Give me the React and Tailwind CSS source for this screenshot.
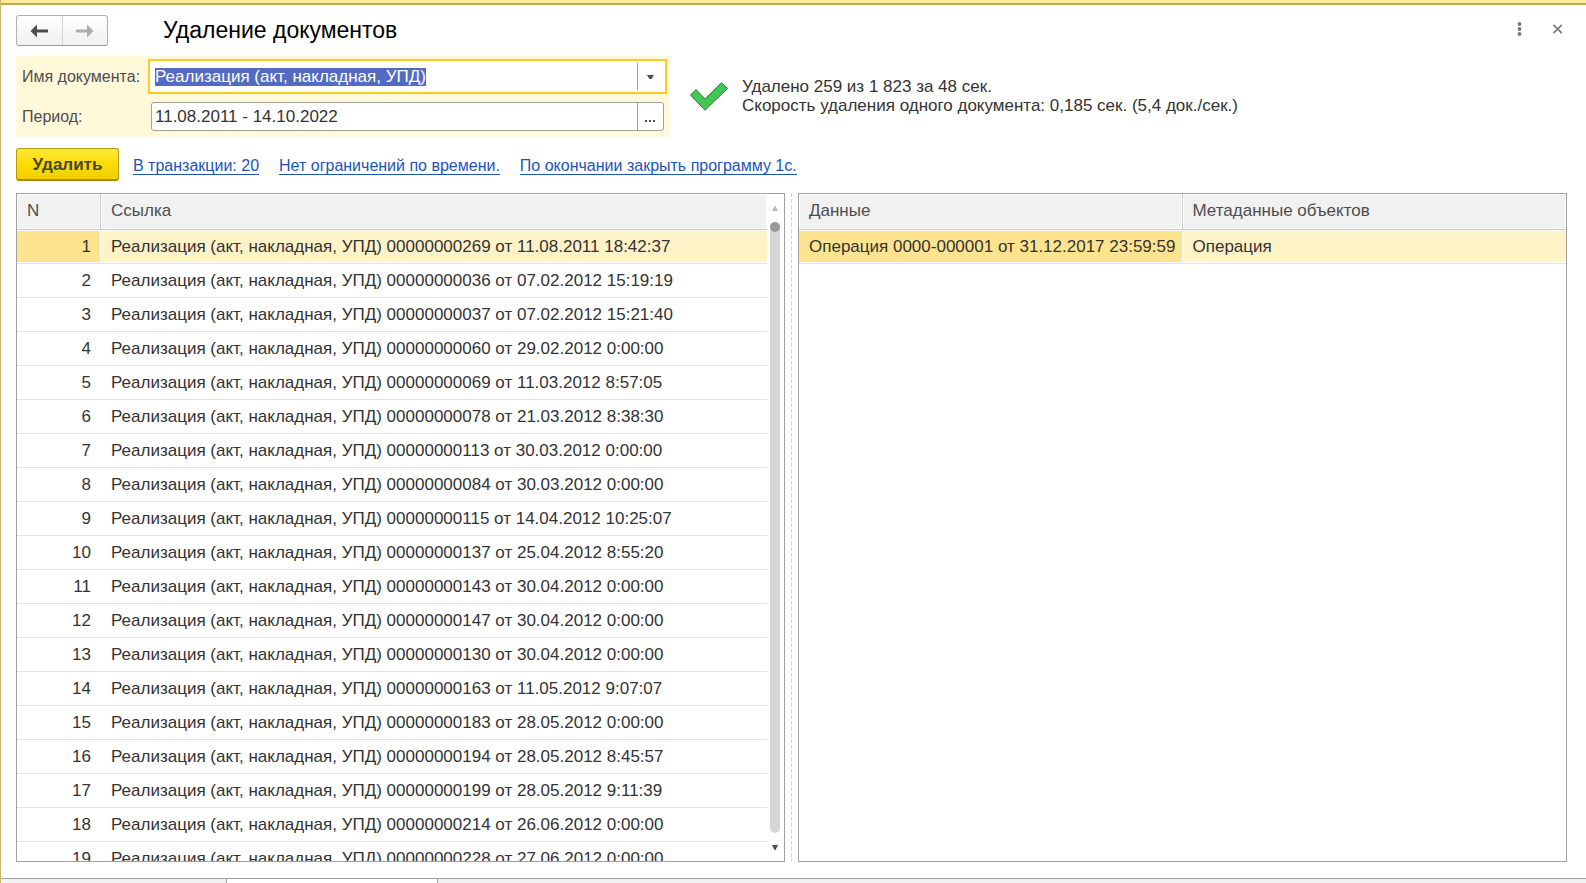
import { useEffect, useRef } from "react";

const documents = [
  ["00000000269", "11.08.2011 18:42:37"],
  ["00000000036", "07.02.2012 15:19:19"],
  ["00000000037", "07.02.2012 15:21:40"],
  ["00000000060", "29.02.2012 0:00:00"],
  ["00000000069", "11.03.2012 8:57:05"],
  ["00000000078", "21.03.2012 8:38:30"],
  ["00000000113", "30.03.2012 0:00:00"],
  ["00000000084", "30.03.2012 0:00:00"],
  ["00000000115", "14.04.2012 10:25:07"],
  ["00000000137", "25.04.2012 8:55:20"],
  ["00000000143", "30.04.2012 0:00:00"],
  ["00000000147", "30.04.2012 0:00:00"],
  ["00000000130", "30.04.2012 0:00:00"],
  ["00000000163", "11.05.2012 9:07:07"],
  ["00000000183", "28.05.2012 0:00:00"],
  ["00000000194", "28.05.2012 8:45:57"],
  ["00000000199", "28.05.2012 9:11:39"],
  ["00000000214", "26.06.2012 0:00:00"],
  ["00000000228", "27.06.2012 0:00:00"],
];

const headCell =
  "h-9 border-b border-[#c6c6c6] bg-[#f1f1f1] px-[10px] pb-[2px] text-left font-normal text-[#4d4d4d] shadow-[inset_0_0_0_1px_#fff]";
const cell = "h-[34px] border-b border-[#e3e3e3] px-[10px] whitespace-nowrap";
const currentCell =
  "bg-[#fee48f] shadow-[inset_0_1px_0_#fff,inset_0_-1px_0_#fff,inset_-1px_0_0_#fff]";
const currentRow = "bg-[#fef2c7] shadow-[inset_0_1px_0_#fff,inset_0_-1px_0_#fff]";

function TitleBar() {
  return (
    <header className="flex items-start justify-between">
      <div className="flex items-start">
        <div className="flex h-[31px] w-[92px] overflow-hidden rounded-[3px] border border-[#b0b0b0] border-b-[#999] bg-linear-to-b from-white to-[#f0f0f0]">
          <button type="button" aria-label="Назад" className="flex flex-1 items-center justify-center border-r border-[#d4d4d4]">
            <svg width="18" height="14" viewBox="0 0 18 14" fill="#4d4d4d">
              <path d="M0.5 7 7 0.5V5.5H18V8.5H7V13.5Z" />
            </svg>
          </button>
          <button type="button" aria-label="Вперед" className="flex flex-1 items-center justify-center">
            <svg width="18" height="14" viewBox="0 0 18 14" fill="#adadad">
              <path d="M17.5 7 11 0.5V5.5H0V8.5H11V13.5Z" />
            </svg>
          </button>
        </div>
        <h1 className="ml-[55px] text-[23px] leading-[30px] text-black">Удаление документов</h1>
      </div>
      <div className="flex items-center gap-[10px] text-[#777]">
        <button type="button" aria-label="Еще" className="flex size-7 items-center justify-center">
          <svg width="6" height="14" viewBox="0 0 6 14" fill="currentColor">
            <circle cx="2.5" cy="2" r="1.9" />
            <circle cx="2.5" cy="7" r="1.9" />
            <circle cx="2.5" cy="12" r="1.9" />
          </svg>
        </button>
        <button type="button" aria-label="Закрыть" className="-mr-[5px] flex size-7 items-center justify-center">
          <svg width="10" height="10" viewBox="0 0 10 10" stroke="currentColor" strokeWidth="1.7">
            <path d="M0.4 0.8 8.8 9.2M8.8 0.8 0.4 9.2" />
          </svg>
        </button>
      </div>
    </header>
  );
}

function Filters() {
  const nameRef = useRef(null);
  useEffect(() => {
    nameRef.current.focus();
    nameRef.current.select();
  }, []);

  return (
    <div className="grid w-[654px] shrink-0 grid-cols-[126px_1fr] items-center gap-y-2 bg-[#fff9d9] pt-[3px] pr-[3px] pb-[6px] pl-[6px]">
      <label htmlFor="doc-name" className="text-base leading-[18px] text-[#4d4d4d]">Имя документа:</label>
      <div className="flex h-[35px] border-2 border-[#fecb1f] bg-white p-[2px]">
        <input
          id="doc-name"
          ref={nameRef}
          type="text"
          defaultValue="Реализация (акт, накладная, УПД)"
          className="min-w-0 flex-1 pl-[3px] outline-none selection:bg-[#5269c1]/99 selection:text-white"
        />
        <button type="button" aria-label="Выбрать из списка" className="flex w-[26px] items-center justify-center border-l border-[#a0a0a0] pr-px">
          <svg width="7" height="4" viewBox="0 0 7 4" fill="#4d4d4d">
            <path d="M0 0H7L4.5 4H2.5Z" />
          </svg>
        </button>
      </div>
      <label htmlFor="period" className="text-base leading-[18px] text-[#4d4d4d]">Период:</label>
      <div className="mr-[3px] ml-[3px] flex h-[29px] overflow-hidden rounded-[3px] border border-[#a0a0a0] bg-white">
        <input id="period" type="text" defaultValue="11.08.2011 - 14.10.2022" className="min-w-0 flex-1 pl-[3px] outline-none" />
        <button type="button" aria-label="Выбрать период" className="flex w-[26px] items-center justify-center border-l border-[#a0a0a0] pt-[9px] pr-px">
          <svg width="10" height="2" viewBox="0 0 10 2" fill="#4d4d4d">
            <path d="M0 0H2V2H0ZM4 0H6V2H4ZM8 0H10V2H8Z" />
          </svg>
        </button>
      </div>
    </div>
  );
}

function Status() {
  return (
    <div className="flex items-center">
      <svg width="40" height="30" viewBox="0 0 40 30" className="shrink-0">
        <path d="M1.5 13 7 7.5 16 17 32.5 0.7 38.5 6.5 16 28.2Z" fill="#40c756" stroke="#3d7a35" strokeWidth="1" strokeLinejoin="round" />
      </svg>
      <p className="ml-[13px] pb-[2px] leading-[19px]">
        Удалено 259 из 1 823 за 48 сек.
        <br />
        Скорость удаления одного документа: 0,185 сек. (5,4 док./сек.)
      </p>
    </div>
  );
}

function Actions() {
  const link = "border-b border-[#1a56b8] leading-[17px] text-[#1a56b8]";
  return (
    <div className="mt-[11px] flex items-center">
      <button type="button" className="h-[33px] w-[103px] rounded-[3px] border border-[#b59d0a] border-b-2 border-b-[#a28c00] bg-linear-to-b from-[#ffe833] via-[#fcdc00] to-[#f0ce00] pt-px font-bold text-[#4a4432]">
        Удалить
      </button>
      <nav className="ml-[14px] flex gap-5 pt-[3px] text-base">
        <a href="#transaction" className={link}>В транзакции: 20</a>
        <a href="#time-limit" className={link}>Нет ограничений по времени.</a>
        <a href="#on-finish" className={link}>По окончании закрыть программу 1с.</a>
      </nav>
    </div>
  );
}

function DocumentsTable() {
  return (
    <section className="flex min-h-0 border border-[#a0a0a0]">
      <div className="min-w-0 flex-1 overflow-hidden">
        <table className="w-full table-fixed border-separate border-spacing-0">
          <thead>
            <tr>
              <th scope="col" className={`${headCell} w-[84px] border-r`}>N</th>
              <th scope="col" className={headCell}>Ссылка</th>
            </tr>
          </thead>
          <tbody>
            {documents.map(([number, date], i) => (
              <tr key={number}>
                <td className={`${cell} text-right ${i === 0 ? currentCell : ""}`}>{i + 1}</td>
                <td className={`${cell} ${i === 0 ? currentRow : ""}`}>
                  Реализация (акт, накладная, УПД) {number} от {date}
                </td>
              </tr>
            ))}
          </tbody>
        </table>
      </div>
      <div className="flex w-[17px] flex-col items-center pr-1 pl-[3px]">
        <button type="button" aria-label="Прокрутить вверх" className="flex h-7 w-full items-center justify-center">
          <svg width="6" height="5" viewBox="0 0 6 5" fill="#bdbdbd">
            <path d="M2.5 0H3.5L6 5H0Z" />
          </svg>
        </button>
        <div className="w-[10px] flex-1 rounded-full bg-[#d6d6d6]">
          <div className="size-[10px] rounded-full bg-[#999]" />
        </div>
        <button type="button" aria-label="Прокрутить вниз" className="flex h-7 w-full items-center justify-center">
          <svg width="6" height="5" viewBox="0 0 6 5" fill="#4d4d4d">
            <path d="M0 0H6L3.5 5H2.5Z" />
          </svg>
        </button>
      </div>
    </section>
  );
}

function ReferencesTable() {
  return (
    <section className="min-h-0 overflow-hidden border border-[#a0a0a0]">
      <table className="w-full table-fixed border-separate border-spacing-0">
        <thead>
          <tr>
            <th scope="col" className={`${headCell} w-1/2 border-r`}>Данные</th>
            <th scope="col" className={headCell}>Метаданные объектов</th>
          </tr>
        </thead>
        <tbody>
          <tr>
            <td className={`${cell} ${currentCell}`}>Операция 0000-000001 от 31.12.2017 23:59:59</td>
            <td className={`${cell} ${currentRow}`}>Операция</td>
          </tr>
        </tbody>
      </table>
    </section>
  );
}

export default function App() {
  return (
    <div className="flex h-screen flex-col overflow-hidden border-l border-[#c9b866] bg-white font-['Liberation_Sans',Arial,sans-serif] text-[17px] leading-[18px] text-[#333]">
      <div className="h-[5px] shrink-0 border-b-2 border-[#bfab5a] bg-[#ffea9c]" />
      <main className="flex min-h-0 flex-1 flex-col pt-[10px] pr-[19px] pb-4 pl-[15px]">
        <TitleBar />
        <div className="mt-[10px] flex items-center gap-[19px]">
          <Filters />
          <Status />
        </div>
        <Actions />
        <div className="mt-3 grid min-h-0 flex-1 grid-cols-[minmax(0,1fr)_13px_minmax(0,1fr)] grid-rows-[minmax(0,1fr)]">
          <DocumentsTable />
          <div className="ml-[6px] w-px bg-[repeating-linear-gradient(to_bottom,#d4d4d4_0_4px,transparent_4px_6px)]" />
          <ReferencesTable />
        </div>
      </main>
      <footer className="flex h-[5px] shrink-0 border-t border-[#a0a0a0] bg-[#f1f1f1]">
        <div className="ml-[225px] w-[212px] border-x border-[#a0a0a0] bg-white" />
      </footer>
    </div>
  );
}
